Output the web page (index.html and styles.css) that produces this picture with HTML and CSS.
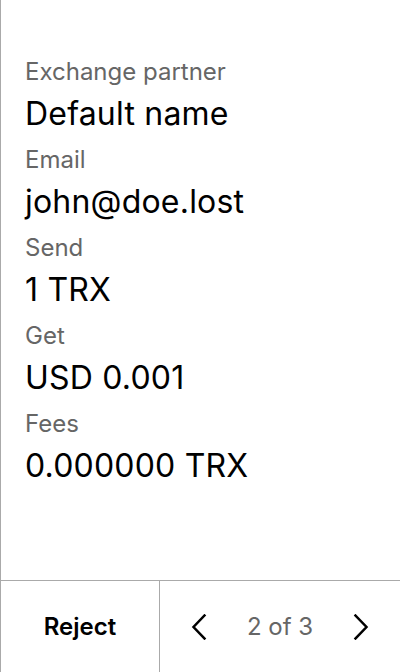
FILE: index.html
```html
<!DOCTYPE html>
<html>
<head>
<meta charset="utf-8">
<link rel="stylesheet" href="styles.css">
</head>
<body>
<div class="screen">
  <div class="content">
    <div class="field">
      <div class="label">Exchange partner</div>
      <div class="value">Default name</div>
    </div>
    <div class="field">
      <div class="label">Email</div>
      <div class="value">john@doe.lost</div>
    </div>
    <div class="field">
      <div class="label">Send</div>
      <div class="value">1 TRX</div>
    </div>
    <div class="field">
      <div class="label">Get</div>
      <div class="value">USD 0.001</div>
    </div>
    <div class="field">
      <div class="label">Fees</div>
      <div class="value">0.000000 TRX</div>
    </div>
  </div>
  <div class="footer">
    <div class="reject">Reject</div>
    <div class="pager">
      <svg class="chev" width="16" height="26" viewBox="0 0 16 26"><path d="M13.5 1.5 L2.5 13 L13.5 24.5" fill="none" stroke="#000" stroke-width="2.5" stroke-linecap="square"/></svg>
      <span class="count">2 of 3</span>
      <svg class="chev" width="16" height="26" viewBox="0 0 16 26"><path d="M2.5 1.5 L13.5 13 L2.5 24.5" fill="none" stroke="#000" stroke-width="2.5" stroke-linecap="square"/></svg>
    </div>
  </div>
</div>
</body>
</html>
```
FILE: styles.css
```css
* { box-sizing: border-box; }
html, body { margin: 0; padding: 0; background: #fff; }
body { font-family: Inter, "Noto Sans", sans-serif; color: #000; }
.screen {
  width: 400px;
  height: 672px;
  border-left: 1px solid #aaa;
  display: flex;
  flex-direction: column;
}
.content {
  flex: 1;
  padding: 56px 24px 0 24px;
  display: flex;
  flex-direction: column;
}
.field { display: flex; flex-direction: column; }
.label {
  font-size: 24px;
  line-height: 32px;
  color: #666;
}
.value {
  font-size: 32px;
  line-height: 48px;
  padding-top: 2px;
  margin-bottom: 6px;
  letter-spacing: 0.2px;
}
.footer {
  height: 92px;
  border-top: 1px solid #aaa;
  display: flex;
}
.reject {
  width: 159px;
  border-right: 1px solid #aaa;
  display: flex;
  align-items: center;
  justify-content: center;
  font-size: 24px;
  font-weight: 600;
}
.pager {
  flex: 1;
  display: flex;
  align-items: center;
  justify-content: space-between;
  padding: 0 31px 0 31px;
}
.chev { display: block; }
.count { font-size: 24px; color: #666; }
```
